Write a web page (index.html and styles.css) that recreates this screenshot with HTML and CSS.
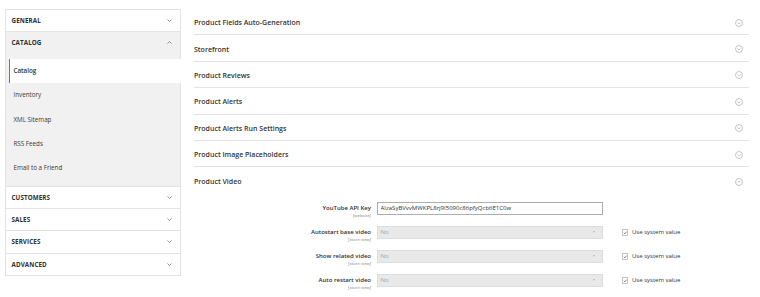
FILE: index.html
```html
<!DOCTYPE html>
<html>

<head>
    <title>Configuration - Catalog</title>
    <meta charset="UTF-8">
    <link rel="stylesheet" href="styles.css">
</head>

<body>
    <div class="page">
        <aside class="nav">
            <div class="nav-block">
                <div class="nav-title">General
                    <svg class="chevron" viewBox="0 0 10 6"><path d="M1 1l4 4 4-4" /></svg>
                </div>
            </div>
            <div class="nav-block open">
                <div class="nav-title">Catalog
                    <svg class="chevron" viewBox="0 0 10 6"><path d="M1 5l4-4 4 4" /></svg>
                </div>
                <ul class="nav-items">
                    <li class="active">Catalog</li>
                    <li>Inventory</li>
                    <li>XML Sitemap</li>
                    <li>RSS Feeds</li>
                    <li>Email to a Friend</li>
                </ul>
            </div>
            <div class="nav-block">
                <div class="nav-title">Customers
                    <svg class="chevron" viewBox="0 0 10 6"><path d="M1 1l4 4 4-4" /></svg>
                </div>
            </div>
            <div class="nav-block">
                <div class="nav-title">Sales
                    <svg class="chevron" viewBox="0 0 10 6"><path d="M1 1l4 4 4-4" /></svg>
                </div>
            </div>
            <div class="nav-block">
                <div class="nav-title">Services
                    <svg class="chevron" viewBox="0 0 10 6"><path d="M1 1l4 4 4-4" /></svg>
                </div>
            </div>
            <div class="nav-block">
                <div class="nav-title">Advanced
                    <svg class="chevron" viewBox="0 0 10 6"><path d="M1 1l4 4 4-4" /></svg>
                </div>
            </div>
        </aside>

        <main class="content">
            <div class="section">
                <span class="section-title">Product Fields Auto-Generation</span>
                <svg class="toggle" viewBox="0 0 16 16"><circle cx="8" cy="8" r="7" /><path d="M5 7l3 3 3-3" /></svg>
            </div>
            <div class="section">
                <span class="section-title">Storefront</span>
                <svg class="toggle" viewBox="0 0 16 16"><circle cx="8" cy="8" r="7" /><path d="M5 7l3 3 3-3" /></svg>
            </div>
            <div class="section">
                <span class="section-title">Product Reviews</span>
                <svg class="toggle" viewBox="0 0 16 16"><circle cx="8" cy="8" r="7" /><path d="M5 7l3 3 3-3" /></svg>
            </div>
            <div class="section">
                <span class="section-title">Product Alerts</span>
                <svg class="toggle" viewBox="0 0 16 16"><circle cx="8" cy="8" r="7" /><path d="M5 7l3 3 3-3" /></svg>
            </div>
            <div class="section">
                <span class="section-title">Product Alerts Run Settings</span>
                <svg class="toggle" viewBox="0 0 16 16"><circle cx="8" cy="8" r="7" /><path d="M5 7l3 3 3-3" /></svg>
            </div>
            <div class="section">
                <span class="section-title">Product Image Placeholders</span>
                <svg class="toggle" viewBox="0 0 16 16"><circle cx="8" cy="8" r="7" /><path d="M5 7l3 3 3-3" /></svg>
            </div>
            <div class="section open">
                <span class="section-title">Product Video</span>
                <svg class="toggle" viewBox="0 0 16 16"><circle cx="8" cy="8" r="7" /><path d="M5 9l3-3 3 3" /></svg>
            </div>

            <div class="fieldset">
                <div class="field-row">
                    <div class="field-label">
                        <span class="label">YouTube API Key</span>
                        <span class="scope">[website]</span>
                    </div>
                    <input class="text-input" type="text" value="AIzaSyBVvvMWKPL8rj9I5090c86pfyQcb6E1C0w">
                    <div></div>
                </div>
                <div class="field-row">
                    <div class="field-label">
                        <span class="label">Autostart base video</span>
                        <span class="scope">[store view]</span>
                    </div>
                    <div class="select disabled">No<span class="arrow"></span></div>
                    <div class="use-system"><span class="checkbox"><svg viewBox="0 0 10 10"><path d="M2 5.2l2 2 4-4.4" /></svg></span>Use system value</div>
                </div>
                <div class="field-row">
                    <div class="field-label">
                        <span class="label">Show related video</span>
                        <span class="scope">[store view]</span>
                    </div>
                    <div class="select disabled">No<span class="arrow"></span></div>
                    <div class="use-system"><span class="checkbox"><svg viewBox="0 0 10 10"><path d="M2 5.2l2 2 4-4.4" /></svg></span>Use system value</div>
                </div>
                <div class="field-row">
                    <div class="field-label">
                        <span class="label">Auto restart video</span>
                        <span class="scope">[store view]</span>
                    </div>
                    <div class="select disabled">No<span class="arrow"></span></div>
                    <div class="use-system"><span class="checkbox"><svg viewBox="0 0 10 10"><path d="M2 5.2l2 2 4-4.4" /></svg></span>Use system value</div>
                </div>
            </div>
        </main>
    </div>
</body>

</html>
```

FILE: styles.css
```css
html,
body {
    margin: 0;
    background: #fff;
}

/* page is laid out at admin size and shown zoomed out;
   1px borders still take a full screen pixel, heights allow for that */
.page {
    zoom: 0.5;
    display: flex;
    align-items: flex-start;
    gap: 26px;
    width: 1520px;
    padding: 18px 22px 0 9px;
    box-sizing: border-box;
    font-family: "Open Sans", "Liberation Sans", sans-serif;
    color: #303030;
}

/* side navigation */
.nav {
    width: 353px;
    flex-shrink: 0;
    border: 1px solid #e3e3e3;
    box-sizing: border-box;
}

.nav-block + .nav-block {
    border-top: 1px solid #e3e3e3;
}

.nav-title {
    height: 42.5px;
    display: flex;
    align-items: center;
    justify-content: space-between;
    padding: 0 16px 0 12px;
    font-size: 12.5px;
    font-weight: 700;
    text-transform: uppercase;
    letter-spacing: 0.2px;
}

.chevron {
    width: 10px;
    height: 6px;
    fill: none;
    stroke: #6b6b6b;
    stroke-width: 1.4;
}

.nav-block.open {
    background: #f1f1f1;
}

.nav-items {
    list-style: none;
    margin: 0;
    padding: 10px 0 12px;
}

.nav-items li {
    height: 48.5px;
    display: flex;
    align-items: center;
    margin-left: 6px;
    padding-left: 8px;
    border-left: 3px solid transparent;
    font-size: 12.5px;
    color: #41362f;
}

.nav-items li.active {
    background: #fff;
    border-left-color: #eb5202;
    margin-right: -1px;
    color: #303030;
    font-weight: 600;
}

/* config sections */
.content {
    flex: 1;
}

.section {
    height: 52.8px;
    box-sizing: border-box;
    display: flex;
    align-items: center;
    justify-content: space-between;
    border-bottom: 1px solid #e3e3e3;
    padding: 4px 12px 0 0;
}

.section.open {
    border-bottom: none;
}

.section-title {
    font-size: 14px;
    font-weight: 600;
    color: #333;
}

.toggle {
    width: 16px;
    height: 16px;
    fill: none;
    stroke: #a0a0a0;
    stroke-width: 1.2;
}

/* product video fields */
.fieldset {
    padding-top: 16px;
}

.field-row {
    display: grid;
    grid-template-columns: 354px 452px auto;
    grid-template-rows: 27px;
    column-gap: 12px;
    margin-bottom: 21px;
}

.field-label {
    height: 27px;
    display: flex;
    flex-direction: column;
    align-items: flex-end;
    padding-top: 3px;
    box-sizing: border-box;
    overflow: visible;
}

.label {
    font-size: 12px;
    font-weight: 600;
    line-height: 20px;
}

.scope {
    font-size: 8.5px;
    line-height: 10px;
    color: #808080;
}

.text-input,
.select {
    height: 27px;
    box-sizing: border-box;
    border: 1px solid #adadad;
    padding: 0 5px;
    font-family: inherit;
    font-size: 12px;
    color: #303030;
    margin: 0;
}

.select {
    display: flex;
    align-items: center;
    justify-content: space-between;
}

.select.disabled {
    background: #e9e9e9;
    border-color: #dcdcdc;
    color: #a8a8a8;
}

.arrow {
    width: 0;
    height: 0;
    margin-right: 10px;
    border-left: 3px solid transparent;
    border-right: 3px solid transparent;
    border-top: 4px solid #b5b5b5;
}

.use-system {
    display: flex;
    align-items: center;
    padding-left: 25px;
    font-size: 12px;
    color: #303030;
}

.checkbox {
    width: 13px;
    height: 13px;
    box-sizing: border-box;
    border: 1px solid #c2c2c2;
    background: #fff;
    margin-right: 8px;
    display: flex;
}

.checkbox svg {
    width: 11px;
    height: 11px;
    fill: none;
    stroke: #41362f;
    stroke-width: 1.6;
}
```
